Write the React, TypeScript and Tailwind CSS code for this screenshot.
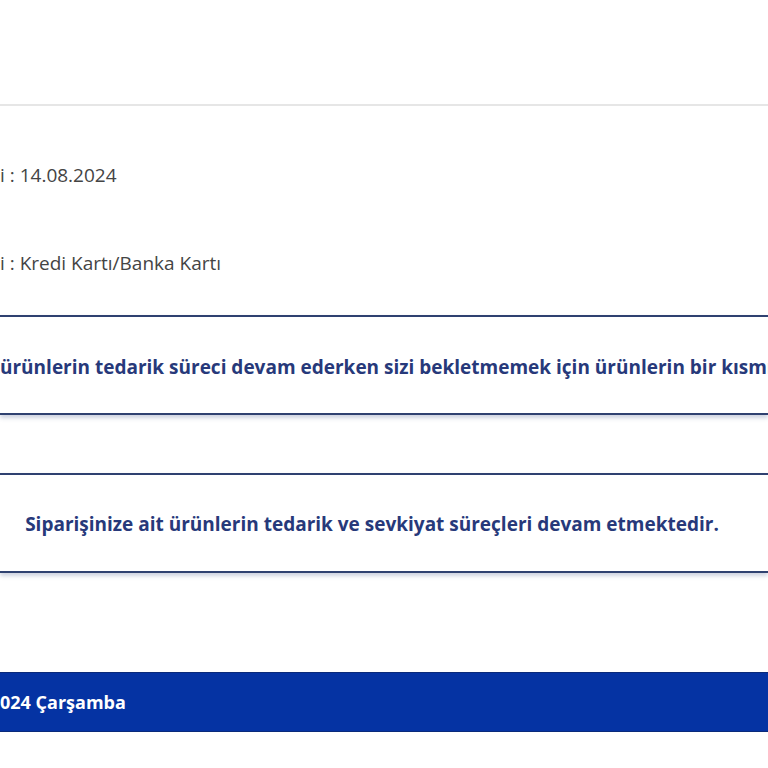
export default function App() {
  return (
    <div className="h-[768px] w-[768px] overflow-hidden bg-white font-['Open_Sans',sans-serif]">
      <div className="h-[104px]" />
      <div className="border-t-2 border-[#e6e6e6]" />

      {/* order info rows */}
      <div className="flex flex-col text-[19px] text-[#444]">
        <div className="mt-[57px] flex h-[24px] items-center whitespace-nowrap">
          <span>i : 14.08.2024</span>
        </div>
        <div className="mt-[64px] flex h-[24px] items-center whitespace-nowrap">
          <span>i : Kredi Kartı/Banka Kartı</span>
        </div>
      </div>

      <div className="mt-[40px] flex h-[100px] items-center overflow-hidden whitespace-nowrap border-y-2 border-[#2f4170] bg-white pt-[4px] shadow-[0_3px_4px_rgba(60,80,130,0.25)]">
        <span className="text-[19px] font-bold text-[#27397a]">
          ürünlerin tedarik süreci devam ederken sizi bekletmemek için ürünlerin bir kısmı
        </span>
      </div>

      <div className="mt-[58px] flex h-[100px] items-center justify-center whitespace-nowrap border-y-2 border-[#2f4170] bg-white pr-[24px] pt-[2px] shadow-[0_3px_4px_rgba(60,80,130,0.25)]">
        <span className="text-[19px] font-bold text-[#27397a]">
          Siparişinize ait ürünlerin tedarik ve sevkiyat süreçleri devam etmektedir.
        </span>
      </div>

      <div className="mt-[99px] flex h-[60px] items-center whitespace-nowrap border-y border-[#0a2a7a] bg-[#0533a3]">
        <span className="text-[18px] font-bold text-white">024 Çarşamba</span>
      </div>
    </div>
  );
}
